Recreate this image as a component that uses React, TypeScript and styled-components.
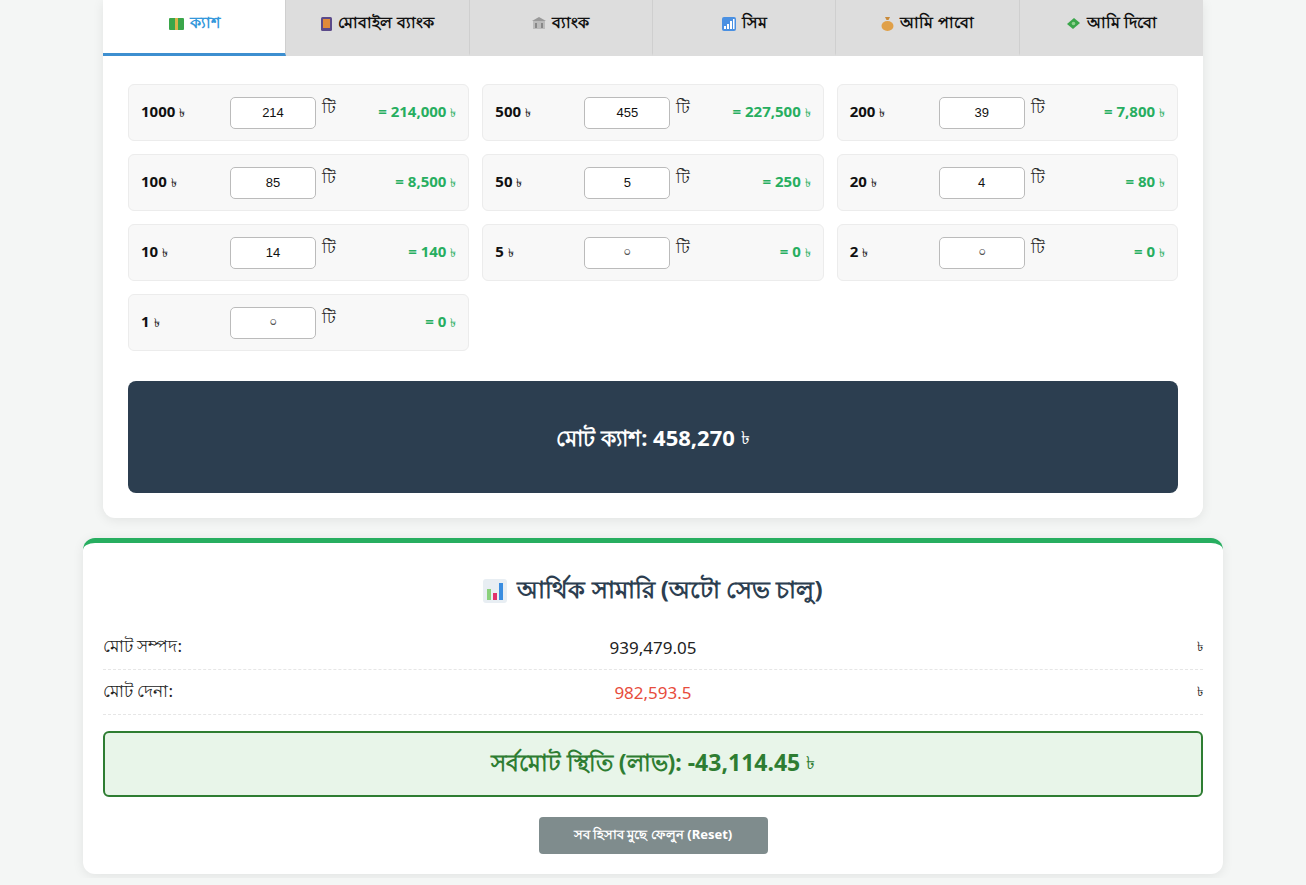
import React from "react";
import styled, { createGlobalStyle } from "styled-components";

const Global = createGlobalStyle`
  body { margin: 0; background: #f4f6f5; font-family: "Noto Sans", "Open Sans", sans-serif; color: #222; }
`;

const Page = styled.div`
  display: flex;
  flex-direction: column;
  align-items: center;
  gap: 20px;
  padding-bottom: 4px;
`;

const Card = styled.div`
  width: 1100px;
  background: #fff;
  border-radius: 0 0 12px 12px;
  box-shadow: 0 2px 12px rgba(0, 0, 0, 0.08);
  overflow: hidden;
`;

const Tabs = styled.div`
  display: grid;
  grid-template-columns: repeat(6, 1fr);
  background: #dddddd;
`;

const Tab = styled.div<{ $active?: boolean }>`
  height: 47px;
  display: flex;
  align-items: center;
  justify-content: center;
  gap: 6px;
  font-size: 16px;
  font-weight: 700;
  color: ${(p) => (p.$active ? "#3498db" : "#111")};
  background: ${(p) => (p.$active ? "#fff" : "#dddddd")};
  border-bottom: 3px solid ${(p) => (p.$active ? "#3d8fd0" : "#dddddd")};
  border-right: 1px solid #cfcfcf;
  padding-bottom: 6px;
  &:last-child { border-right: none; }
`;

const Body = styled.div`
  padding: 28px 25px 25px;
`;

const Grid = styled.div`
  display: grid;
  grid-template-columns: repeat(3, 1fr);
  gap: 13px 13px;
`;

const Note = styled.div`
  height: 57px;
  box-sizing: border-box;
  background: #f8f8f8;
  border: 1px solid #ececec;
  border-radius: 6px;
  display: flex;
  align-items: center;
  padding: 0 12px;
`;

const Face = styled.div`
  width: 89px;
  font-weight: 700;
  font-size: 15px;
  color: #111;
  span { font-weight: 400; font-size: 12px; }
`;

const Count = styled.div`
  width: 86px;
  height: 32px;
  box-sizing: border-box;
  border: 1px solid #bbb;
  border-radius: 5px;
  background: #fff;
  display: flex;
  align-items: center;
  justify-content: center;
  font-family: "Liberation Sans", Arial, sans-serif;
  font-size: 13px;
  color: ${(p: { $empty?: boolean }) => (p.$empty ? "#555" : "#111")};
`;

const Unit = styled.div`
  margin-left: 6px;
  align-self: flex-start;
  margin-top: 10px;
  font-size: 16px;
`;

const Sum = styled.div`
  margin-left: auto;
  color: #27ae60;
  font-weight: 700;
  font-size: 15px;
  span { font-weight: 400; font-size: 12px; }
`;

const Total = styled.div`
  margin-top: 30px;
  height: 112px;
  background: #2c3e50;
  border-radius: 8px;
  display: flex;
  align-items: center;
  justify-content: center;
  color: #fff;
  font-size: 22px;
  font-weight: 700;
  padding-top: 4px;
  box-sizing: border-box;
  span { font-weight: 400; font-size: 18px; }
`;

const Summary = styled.div`
  width: 1140px;
  box-sizing: border-box;
  background: #fff;
  border-top: 5px solid #27ae60;
  border-radius: 12px;
  box-shadow: 0 2px 12px rgba(0, 0, 0, 0.08);
  padding: 28px 20px 20px;
`;

const Title = styled.h2`
  margin: 0 0 14px;
  text-align: center;
  font-size: 24px;
  color: #2c3e50;
  display: flex;
  justify-content: center;
  align-items: center;
  gap: 10px;
`;

const Row = styled.div`
  display: grid;
  grid-template-columns: 1fr 1fr 1fr;
  align-items: center;
  height: 44px;
  border-bottom: 1px dashed #e6e6e6;
  font-size: 17px;
`;

const Value = styled.div<{ $red?: boolean }>`
  text-align: center;
  color: ${(p) => (p.$red ? "#e74c3c" : "#222")};
`;

const Taka = styled.div`
  text-align: right;
  font-size: 13px;
`;

const Status = styled.div`
  margin-top: 16px;
  height: 66px;
  box-sizing: border-box;
  border: 2px solid #2e7d32;
  border-radius: 6px;
  background: #e8f5e9;
  color: #2e7d32;
  font-size: 23px;
  font-weight: 700;
  display: flex;
  align-items: center;
  justify-content: center;
  span { font-weight: 400; font-size: 18px; margin-left: 6px; }
`;

const Reset = styled.button`
  display: block;
  margin: 20px auto 0;
  width: 229px;
  height: 37px;
  border: none;
  border-radius: 4px;
  background: #7f8c8d;
  color: #fff;
  font-family: "Noto Sans", sans-serif;
  font-weight: 700;
  font-size: 13px;
`;

const Icon = ({ kind }: { kind: string }) => {
  if (kind === "cash")
    return (
      <svg width="15" height="12" viewBox="0 0 15 12"><rect width="15" height="12" rx="1" fill="#3aa64a" /><rect x="6" width="3" height="12" fill="#d9b34a" /></svg>
    );
  if (kind === "mobile")
    return (
      <svg width="11" height="14" viewBox="0 0 11 14"><rect width="11" height="14" rx="1.5" fill="#5b4a8a" /><rect x="2" y="2" width="7" height="9" fill="#e08a3a" /></svg>
    );
  if (kind === "bank")
    return (
      <svg width="14" height="13" viewBox="0 0 14 13"><path d="M7 0L14 4H0z" fill="#999" /><rect x="1" y="4" width="12" height="8" fill="#bbb" /><rect x="3" y="6" width="2" height="5" fill="#888" /><rect x="9" y="6" width="2" height="5" fill="#888" /></svg>
    );
  if (kind === "sim")
    return (
      <svg width="14" height="14" viewBox="0 0 14 14"><rect width="14" height="14" rx="2" fill="#4a90e2" /><rect x="2" y="9" width="2" height="3" fill="#fff" /><rect x="5" y="7" width="2" height="5" fill="#fff" /><rect x="8" y="4" width="2" height="8" fill="#fff" /><rect x="11" y="2" width="1.5" height="10" fill="#fff" /></svg>
    );
  if (kind === "bag")
    return (
      <svg width="13" height="15" viewBox="0 0 13 15"><path d="M4 1h5L7.5 4h-2z" fill="#c98a3a" /><ellipse cx="6.5" cy="10" rx="6" ry="5" fill="#e0a048" /></svg>
    );
  if (kind === "give")
    return (
      <svg width="15" height="13" viewBox="0 0 15 13"><path d="M1 7L8 1l6 5-7 6z" fill="#3aa64a" /><circle cx="7.5" cy="6.5" r="1.8" fill="#8fd18f" /></svg>
    );
  return (
    <svg width="24" height="24" viewBox="0 0 24 24"><rect width="24" height="24" rx="3" fill="#e8eef3" /><rect x="4" y="10" width="4" height="11" fill="#8bd17c" /><rect x="10" y="14" width="4" height="7" fill="#e0306a" /><rect x="16" y="4" width="4" height="17" fill="#3a8de0" /></svg>
  );
};

const tabs = [
  ["cash", "ক্যাশ"],
  ["mobile", "মোবাইল ব্যাংক"],
  ["bank", "ব্যাংক"],
  ["sim", "সিম"],
  ["bag", "আমি পাবো"],
  ["give", "আমি দিবো"],
];

const notes: [number, string, string][] = [
  [1000, "214", "214,000"],
  [500, "455", "227,500"],
  [200, "39", "7,800"],
  [100, "85", "8,500"],
  [50, "5", "250"],
  [20, "4", "80"],
  [10, "14", "140"],
  [5, "", "0"],
  [2, "", "0"],
  [1, "", "0"],
];

export default function App() {
  return (
    <>
      <Global />
      <Page>
        <Card>
          <Tabs>
            {tabs.map(([k, t], i) => (
              <Tab key={k} $active={i === 0}>
                <Icon kind={k} />
                {t}
              </Tab>
            ))}
          </Tabs>
          <Body>
            <Grid>
              {notes.map(([f, c, s]) => (
                <Note key={f}>
                  <Face>
                    {f} <span>৳</span>
                  </Face>
                  <Count $empty={!c}>{c || "০"}</Count>
                  <Unit>টি</Unit>
                  <Sum>
                    = {s} <span>৳</span>
                  </Sum>
                </Note>
              ))}
            </Grid>
            <Total>
              মোট ক্যাশ: 458,270&nbsp;<span>৳</span>
            </Total>
          </Body>
        </Card>
        <Summary>
          <Title>
            <Icon kind="chart" />
            আর্থিক সামারি (অটো সেভ চালু)
          </Title>
          <Row>
            <div>মোট সম্পদ:</div>
            <Value>939,479.05</Value>
            <Taka>৳</Taka>
          </Row>
          <Row>
            <div>মোট দেনা:</div>
            <Value $red>982,593.5</Value>
            <Taka>৳</Taka>
          </Row>
          <Status>
            সর্বমোট স্থিতি (লাভ): -43,114.45<span>৳</span>
          </Status>
          <Reset>সব হিসাব মুছে ফেলুন (Reset)</Reset>
        </Summary>
      </Page>
    </>
  );
}
